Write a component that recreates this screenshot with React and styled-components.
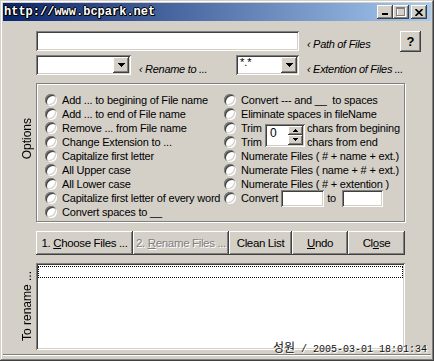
import React from 'react';
import styled, { createGlobalStyle, css } from 'styled-components';

const face = '#d4d0c8';

const Global = createGlobalStyle`
  html, body { margin: 0; padding: 0; background: ${face}; }
  body { font-family: "Liberation Sans", Arial, sans-serif; }
`;

const raised = css`
  box-shadow: inset -1px -1px #404040, inset 1px 1px #fff, inset -2px -2px #808080, inset 2px 2px ${face};
`;
const sunken = css`
  box-shadow: inset 1px 1px #808080, inset -1px -1px #fff, inset 2px 2px #404040, inset -2px -2px ${face};
`;

const Window = styled.div`
  position: relative;
  width: 434px;
  height: 361px;
  box-sizing: border-box;
  padding: 3px;
  background: ${face};
  box-shadow: inset -1px -1px #404040, inset 1px 1px ${face}, inset -2px -2px #808080, inset 2px 2px #fff;
  display: flex;
  flex-direction: column;
  font-family: "Liberation Sans", Arial, sans-serif;
  font-size: 11px;
  color: #000;
  overflow: hidden;
`;

const TitleBar = styled.div`
  height: 18px;
  flex: none;
  background: linear-gradient(to right, #0a246a, #a6caf0);
  display: flex;
  align-items: center;
  padding: 0 4px 0 1px;
`;

const Title = styled.div`
  flex: 1;
  font-family: "Liberation Mono", monospace;
  font-weight: bold;
  font-size: 12px;
  color: #fff;
  text-shadow: 1px 0 #000, -1px 0 #000, 0 1px #000, 0 -1px #000, 1px 1px #000;
`;

const CaptionButton = styled.div`
  width: 16px;
  height: 14px;
  box-sizing: border-box;
  background: ${face};
  ${raised};
  display: flex;
  align-items: center;
  justify-content: center;
  margin-left: ${p => p.$gap || 0}px;
`;

const Body = styled.div`
  display: grid;
  grid-template-columns: 30px 395px;
  column-gap: 3px;
  row-gap: 8px;
  padding-top: 10px;
  grid-template-areas:
    ". top"
    "optlabel group"
    ". buttons"
    "listlabel list";
`;

const SideLabel = styled.div`
  grid-area: ${p => p.$area};
  writing-mode: vertical-rl;
  transform: rotate(180deg);
  font-size: 12px;
  line-height: 12px;
  justify-self: end;
  align-self: ${p => p.$align};
  margin-top: ${p => p.$mt || 0}px;
  white-space: nowrap;
`;

const TopGrid = styled.div`
  grid-area: top;
  display: grid;
  grid-template-columns: 263px minmax(0, 1fr) auto;
  grid-template-rows: 21px 20px;
  column-gap: 8px;
  row-gap: 3px;
`;

const Field = styled.div`
  width: ${p => p.$w}px;
  height: 20px;
  box-sizing: border-box;
  background: #fff;
  ${sunken};
`;

const Hint = styled.div`
  font-style: italic;
  font-size: 11px;
  line-height: 13px;
  letter-spacing: -0.3px;
  padding-top: ${p => p.$pt}px;
  margin-left: ${p => p.$ml || 0}px;
  white-space: nowrap;
`;

const HelpButton = styled.div`
  width: 21px;
  height: 21px;
  box-sizing: border-box;
  ${raised};
  display: flex;
  align-items: center;
  justify-content: center;
  font-weight: bold;
  font-size: 13px;
  margin-right: 10px;
`;

const RenameCell = styled.div`
  display: flex;
  align-items: flex-start;
`;

const Combo = styled.div`
  width: ${p => p.$w}px;
  height: 20px;
  box-sizing: border-box;
  background: #fff;
  ${sunken};
  padding: 2px;
  display: flex;
  margin-left: ${p => (p.$auto ? 'auto' : '0')};
`;

const ComboText = styled.span`
  flex: 1;
  padding-left: 2px;
  font-size: 11px;
  line-height: 11px;
`;

const DropButton = styled.div`
  width: 16px;
  height: 16px;
  box-sizing: border-box;
  background: ${face};
  ${raised};
  display: flex;
  align-items: center;
  justify-content: center;
`;

const Group = styled.div`
  grid-area: group;
  width: 369px;
  height: 139px;
  box-sizing: border-box;
  border: 1px solid #808080;
  box-shadow: inset 1px 1px #fff, 1px 1px #fff;
  padding: 9px 0 2px 8px;
  display: grid;
  grid-template-columns: 179px 1fr;
`;

const Column = styled.div`
  display: flex;
  flex-direction: column;
`;

const Option = styled.div`
  display: flex;
  align-items: center;
  height: 14px;
  white-space: nowrap;
  letter-spacing: -0.2px;
`;

const Radio = styled.span`
  width: 12px;
  height: 12px;
  flex: none;
  border-radius: 50%;
  background: #fff;
  margin-right: 5px;
  box-shadow: inset 1px 1px #808080, inset -1px -1px #fff, inset 2px 2px #404040, inset -2px -2px ${face};
`;

const TrimGrid = styled.div`
  display: grid;
  grid-template-columns: 17px 24px 40px auto;
  grid-template-rows: 14px 14px;
  align-items: center;
  white-space: nowrap;
  letter-spacing: -0.2px;
`;

const Spin = styled.div`
  grid-column: 3;
  grid-row: 1 / 3;
  width: 40px;
  height: 23px;
  box-sizing: border-box;
  background: #fff;
  ${sunken};
  padding: 2px;
  display: flex;
`;

const SpinValue = styled.span`
  flex: 1;
  padding-left: 3px;
  font-size: 12px;
  line-height: 14px;
`;

const SpinButtons = styled.div`
  width: 15px;
  display: flex;
  flex-direction: column;
`;

const SpinButton = styled.div`
  flex: 1;
  background: ${face};
  ${raised};
  display: flex;
  align-items: center;
  justify-content: center;
`;

const SideText = styled.span`
  margin-left: 2px;
`;

const SmallField = styled.div`
  width: ${p => p.$w}px;
  height: 17px;
  flex: none;
  box-sizing: border-box;
  background: #fff;
  ${sunken};
  margin-left: ${p => p.$ml}px;
`;

const Joiner = styled.span`
  margin-left: 3px;
`;

const ButtonRow = styled.div`
  grid-area: buttons;
  display: flex;
  width: 369px;
  margin-top: 1px;
`;

const Button = styled.div`
  width: ${p => p.$w}px;
  height: 24px;
  box-sizing: border-box;
  background: ${face};
  ${raised};
  display: flex;
  align-items: center;
  justify-content: center;
  font-size: 11.5px;
  letter-spacing: -0.35px;
  white-space: pre;
  color: ${p => (p.$disabled ? '#808080' : '#000')};
  text-shadow: ${p => (p.$disabled ? '1px 1px #fff' : 'none')};
`;

const Key = styled.span`
  text-decoration: underline;
`;

const List = styled.div`
  grid-area: list;
  width: 369px;
  height: 87px;
  box-sizing: border-box;
  background: #fff;
  ${sunken};
  padding: 3px 2px 2px;
`;

const FocusRow = styled.div`
  height: 12px;
  box-sizing: border-box;
  border: 1px dotted #000;
`;

const Footer = styled.div`
  margin-top: auto;
  height: 3px;
  border-top: 1px solid #808080;
  box-shadow: inset 0 1px #fff;
`;

const Status = styled.div`
  position: absolute;
  right: 7px;
  bottom: 4px;
  line-height: 14px;
  font-family: "Liberation Mono", "Noto Sans CJK KR", monospace;
  font-size: 10px;
  color: #111;
  text-shadow: 1px 1px 0 #fff;
  white-space: pre;
`;

const Hangul = styled.span`
  font-family: "Noto Sans CJK KR", sans-serif;
  font-size: 12px;
`;

const Arrow = ({ up }) => (
  <svg width="7" height="4" viewBox="0 0 7 4" shapeRendering="crispEdges">
    <polygon points={up ? '3.5,0 7,4 0,4' : '0,0 7,0 3.5,4'} fill="#000" />
  </svg>
);

const SmallArrow = ({ up }) => (
  <svg width="5" height="3" viewBox="0 0 5 3" shapeRendering="crispEdges">
    <polygon points={up ? '2.5,0 5,3 0,3' : '0,0 5,0 2.5,3'} fill="#000" />
  </svg>
);

const leftOptions = [
  'Add ... to begining of File name',
  'Add ... to end of File name',
  'Remove ... from File name',
  'Change Extension to ...',
  'Capitalize first letter',
  'All Upper case',
  'All Lower case',
  'Capitalize first letter of every word',
  'Convert spaces to __',
];

export default function App() {
  return (
    <>
      <Global />
      <Window>
        <TitleBar>
          <Title>http://www.bcpark.net</Title>
          <CaptionButton>
            <svg width="8" height="8" viewBox="0 0 8 8" shapeRendering="crispEdges">
              <rect x="1" y="5" width="6" height="2" fill="#000" />
            </svg>
          </CaptionButton>
          <CaptionButton>
            <svg width="10" height="10" viewBox="0 0 10 10" shapeRendering="crispEdges">
              <rect x="1.5" y="1.5" width="8" height="8" fill="none" stroke="#fff" />
              <rect x="0.5" y="0.5" width="8" height="8" fill="none" stroke="#808080" />
              <rect x="0" y="0" width="9" height="2" fill="#808080" />
            </svg>
          </CaptionButton>
          <CaptionButton $gap={2}>
            <svg width="8" height="7" viewBox="0 0 8 7">
              <path d="M0.5 0 L7.5 7 M7.5 0 L0.5 7" stroke="#000" strokeWidth="1.6" />
            </svg>
          </CaptionButton>
        </TitleBar>

        <Body>
          <TopGrid>
            <Field $w={263} />
            <Hint $pt={7}>&lsaquo; Path of Files</Hint>
            <HelpButton>?</HelpButton>
            <RenameCell>
              <Combo $w={95}>
                <ComboText />
                <DropButton><Arrow /></DropButton>
              </Combo>
              <Hint $pt={8} $ml={8}>&lsaquo; Rename to ...</Hint>
              <Combo $w={63} $auto>
                <ComboText>*.*</ComboText>
                <DropButton><Arrow /></DropButton>
              </Combo>
            </RenameCell>
            <Hint $pt={8}>&lsaquo; Extention of Files ...</Hint>
          </TopGrid>

          <SideLabel $area="optlabel" $align="start" $mt={35}>Options</SideLabel>
          <Group>
            <Column>
              {leftOptions.map(t => (
                <Option key={t}><Radio />{t}</Option>
              ))}
            </Column>
            <Column>
              <Option><Radio />Convert --- and __&nbsp; to spaces</Option>
              <Option><Radio />Eliminate spaces in fileName</Option>
              <TrimGrid>
                <Radio />
                <span>Trim</span>
                <Spin>
                  <SpinValue>0</SpinValue>
                  <SpinButtons>
                    <SpinButton><SmallArrow up /></SpinButton>
                    <SpinButton><SmallArrow /></SpinButton>
                  </SpinButtons>
                </Spin>
                <SideText>chars from begining</SideText>
                <Radio />
                <span>Trim</span>
                <SideText>chars from end</SideText>
              </TrimGrid>
              <Option><Radio />Numerate Files ( # + name + ext.)</Option>
              <Option><Radio />Numerate Files ( name + # + ext.)</Option>
              <Option><Radio />Numerate Files ( # + extention )</Option>
              <Option>
                <Radio />Convert
                <SmallField $w={43} $ml={3} />
                <Joiner>to</Joiner>
                <SmallField $w={41} $ml={6} />
              </Option>
            </Column>
          </Group>

          <ButtonRow>
            <Button $w={97}>{'1. '}<Key>C</Key>{'hoose Files ...'}</Button>
            <Button $w={96} $disabled>{'2. '}<Key>R</Key>{'ename Files ...'}</Button>
            <Button $w={63}>Clean List</Button>
            <Button $w={56}><Key>U</Key>ndo</Button>
            <Button $w={57}>Cl<Key>o</Key>se</Button>
          </ButtonRow>

          <SideLabel $area="listlabel" $align="center">To rename ...</SideLabel>
          <List>
            <FocusRow />
          </List>
        </Body>

        <Footer />
        <Status><Hangul>성원</Hangul>{' / 2005-03-01 18:01:34'}</Status>
      </Window>
    </>
  );
}
